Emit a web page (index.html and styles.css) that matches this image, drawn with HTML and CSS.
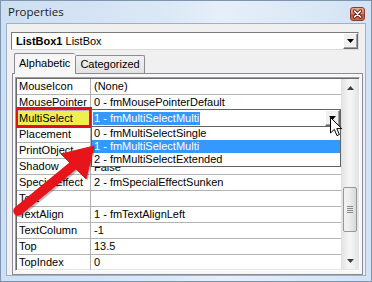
FILE: index.html
```html
<!DOCTYPE html>
<html>
<head>
<meta charset="utf-8">
<link rel="stylesheet" href="styles.css">
</head>
<body>
<div class="window">
  <div class="titlebar">
    <span class="title">Properties</span>
    <div class="close">
      <svg width="15" height="14" viewBox="0 0 15 14">
        <path d="M4.5 4 L10.5 10 M10.5 4 L4.5 10" stroke="#5a1d12" stroke-width="3.2" stroke-linecap="round"/>
        <path d="M4.5 4 L10.5 10 M10.5 4 L4.5 10" stroke="#ffffff" stroke-width="1.6" stroke-linecap="round"/>
      </svg>
    </div>
  </div>
  <div class="client">
    <div class="combo">
      <span class="combo-text"><b>ListBox1</b> ListBox</span>
      <span class="combo-btn"><svg width="7" height="4" viewBox="0 0 7 4"><path d="M0 0 H7 L3.5 4 Z" fill="#000"/></svg></span>
    </div>
    <div class="tabs">
      <div class="tab active">Alphabetic</div>
      <div class="tab">Categorized</div>
    </div>
    <div class="panel">
      <div class="grid">
        <div class="rows">
          <div class="row"><div class="name">MouseIcon</div><div class="value">(None)</div></div>
          <div class="row"><div class="name">MousePointer</div><div class="value">0 - fmMousePointerDefault</div></div>
          <div class="row"><div class="name marked">MultiSelect</div>
            <div class="value editing">
              <div class="editbox">
                <span class="sel">1 - fmMultiSelectMulti</span>
                <span class="edit-btn"><svg width="7" height="4" viewBox="0 0 7 4"><path d="M0 0 H7 L3.5 4 Z" fill="#000"/></svg></span>
                <div class="droplist">
                  <div class="item">0 - fmMultiSelectSingle</div>
                  <div class="item hot">1 - fmMultiSelectMulti</div>
                  <div class="item">2 - fmMultiSelectExtended</div>
                </div>
              </div>
            </div>
          </div>
          <div class="row"><div class="name">Placement</div><div class="value"></div></div>
          <div class="row"><div class="name">PrintObject</div><div class="value"></div></div>
          <div class="row"><div class="name">Shadow</div><div class="value low">False</div></div>
          <div class="row"><div class="name">SpecialEffect</div><div class="value">2 - fmSpecialEffectSunken</div></div>
          <div class="row"><div class="name">Text</div><div class="value"></div></div>
          <div class="row"><div class="name">TextAlign</div><div class="value">1 - fmTextAlignLeft</div></div>
          <div class="row"><div class="name">TextColumn</div><div class="value">-1</div></div>
          <div class="row"><div class="name">Top</div><div class="value">13.5</div></div>
          <div class="row"><div class="name">TopIndex</div><div class="value">0</div></div>
        </div>
        <div class="scrollbar">
          <div class="sb-btn"><svg width="7" height="4" viewBox="0 0 7 4"><path d="M0 4 H7 L3.5 0 Z" fill="#3c3c3c"/></svg></div>
          <div class="sb-track">
            <div class="thumb">
              <svg width="6" height="7" viewBox="0 0 6 7"><path d="M0 0.5 H6 M0 2.5 H6 M0 4.5 H6 M0 6.5 H6" stroke="#8a8a8a" stroke-width="1"/></svg>
            </div>
          </div>
          <div class="sb-btn"><svg width="7" height="4" viewBox="0 0 7 4"><path d="M0 0 H7 L3.5 4 Z" fill="#3c3c3c"/></svg></div>
        </div>
      </div>
    </div>
  </div>

  <svg class="red-arrow" width="372" height="282" viewBox="0 0 372 282">
    <g transform="translate(1.5,1.5)" opacity="0.25">
      <line x1="18" y1="211" x2="74" y2="165" stroke="#000" stroke-width="9.5" stroke-linecap="round"/>
      <polygon points="94,146 61,154 86,179" fill="#000"/>
    </g>
    <line x1="18" y1="211" x2="74" y2="165" stroke="#e8141c" stroke-width="9.5" stroke-linecap="round"/>
    <polygon points="94,146 61,154 86,179" fill="#e8141c" stroke="#e8141c" stroke-width="1" stroke-linejoin="round"/>
  </svg>

  <svg class="cursor" width="14" height="20" viewBox="0 0 14 20">
    <path d="M0.5 0.5 L0.5 16 L4.3 12.4 L7 18.6 L9.4 17.6 L6.8 11.6 L11.8 11.6 Z" fill="#fff" stroke="#000" stroke-width="1" stroke-linejoin="round"/>
  </svg>
</div>
</body>
</html>
```

FILE: styles.css
```css
* { box-sizing: border-box; }

body {
  margin: 0;
  width: 372px;
  height: 282px;
  overflow: hidden;
  font-family: "Liberation Sans", Arial, sans-serif;
  font-size: 11px;
  color: #000;
}

.window {
  position: relative;
  width: 372px;
  height: 282px;
  border: 1px solid #7e95b0;
  background: linear-gradient(90deg, #cddff2 0%, #dbe8f6 45%, #e6eff9 60%, #d3e3f4 100%);
  display: flex;
  flex-direction: column;
}

.titlebar {
  height: 22px;
  display: flex;
  align-items: center;
  justify-content: space-between;
  padding: 0 6px 0 7px;
}

.title {
  font-family: "Open Sans", "Liberation Sans", sans-serif;
  font-size: 11.5px;
  color: #1b1b1b;
  margin-top: -1px;
}

.close {
  width: 15px;
  height: 14px;
  margin-top: 3px;
  border: 1px solid #8c3a2b;
  border-radius: 3px;
  background: linear-gradient(#eaa898 0%, #d98270 45%, #c8503c 55%, #d06a50 100%);
  display: flex;
  align-items: center;
  justify-content: center;
}
.close svg { display: block; margin: -1px; }

.client {
  margin: 0 5px;
  height: 253px;
  background: #f0f0f0;
  border: 1px solid #9db1c8;
  display: flex;
  flex-direction: column;
}

.combo {
  margin: 8px 6px 0 4px;
  height: 18px;
  background: #fff;
  border: 1px solid #7a7a7a;
  border-right-color: #dcdcdc;
  border-bottom-color: #dcdcdc;
  display: flex;
  align-items: center;
  justify-content: space-between;
  padding-left: 4px;
}
.combo-text { line-height: 14px; }
.combo-text b { font-weight: bold; }

.combo-btn, .edit-btn {
  width: 15px;
  height: 16px;
  background: #f0f0f0;
  border: 1px solid;
  border-color: #ffffff #696969 #696969 #ffffff;
  box-shadow: inset -1px -1px 0 #a0a0a0;
  display: flex;
  align-items: center;
  justify-content: center;
}
.combo-btn svg, .edit-btn svg { display: block; }

.tabs {
  display: flex;
  align-items: flex-end;
  height: 20px;
  margin: 3px 0 0 7px;
  position: relative;
  z-index: 2;
}

.tab {
  height: 18px;
  padding: 0 4px;
  border: 1px solid #898c95;
  border-bottom: none;
  background: linear-gradient(#f2f2f2, #e3e3e3);
  line-height: 16px;
  font-size: 11px;
  border-radius: 2px 2px 0 0;
}
.tab.active {
  height: 21px;
  margin-bottom: -1px;
  padding: 0 5px 0 4px;
  background: #f7f7f7;
  line-height: 19px;
  border-right: none;
}

.panel {
  margin: 0 2px 0 5px;
  height: 202px;
  border: 1px solid #898c95;
  background: #f7f7f7;
  padding: 3px 2px 2px 2px;
}

.grid {
  height: 194px;
  display: flex;
  border: 1px solid #a0a0a0;
  border-right-color: #ffffff;
  border-bottom-color: #ffffff;
  box-shadow: inset 1px 1px 0 #696969, inset -1px -1px 0 #e3e3e3;
  padding: 1px 1px 1px 1px;
  background: #fff;
  overflow: hidden;
}

.rows {
  flex: 1;
  display: flex;
  flex-direction: column;
  background: #fff;
}

.row {
  height: 16px;
  flex: none;
  display: flex;
  border-bottom: 1px solid #b2b2b2;
  line-height: 15px;
}

.name {
  width: 74px;
  flex: none;
  border-right: 1px solid #b2b2b2;
  padding-left: 2px;
  white-space: nowrap;
}

.value {
  flex: 1;
  padding-left: 3px;
  white-space: nowrap;
}
.value.low { line-height: 17px; }

.marked {
  position: relative;
  background: #eeee50;
}
.marked::after {
  content: "";
  position: absolute;
  left: -2px;
  top: -4px;
  right: -2px;
  bottom: -2px;
  border: 3px solid #e0101c;
  z-index: 3;
}

.value.editing {
  padding-left: 0;
  position: relative;
  z-index: 4;
}

.editbox {
  position: relative;
  margin-top: -2px;
  height: 18px;
  background: #fff;
  border: 1px solid #646464;
  display: flex;
  align-items: center;
  justify-content: space-between;
  padding-left: 1px;
}

.sel {
  background: #3399ff;
  color: #fff;
  line-height: 13px;
  padding: 0 1px;
}

.edit-btn {
  height: 16px;
}

.droplist {
  position: absolute;
  top: 16px;
  left: -1px;
  right: -1px;
  height: 41px;
  background: #fff;
  border: 1px solid #646464;
  padding: 0;
}

.item {
  height: 13px;
  line-height: 13px;
  padding-left: 2px;
}
.item.hot {
  background: #3399ff;
  color: #fff;
}

.scrollbar {
  width: 17px;
  flex: none;
  display: flex;
  flex-direction: column;
  background: linear-gradient(90deg, #e4e4e4, #f4f4f4 40%, #f4f4f4 60%, #e4e4e4);
  border-left: 1px solid #e0e0e0;
}

.sb-btn {
  height: 17px;
  flex: none;
  display: flex;
  align-items: center;
  justify-content: center;
}

.sb-track {
  flex: 1;
}

.thumb {
  margin: 91px 1px 0 1px;
  height: 45px;
  border: 1px solid #979797;
  border-radius: 2px;
  background: linear-gradient(90deg, #f2f2f2, #ebebeb 50%, #d8d8d8);
  display: flex;
  align-items: center;
  justify-content: center;
}

.red-arrow {
  position: absolute;
  left: -1px;
  top: -1px;
  z-index: 10;
  pointer-events: none;
}

.cursor {
  position: absolute;
  left: 329px;
  top: 116px;
  z-index: 11;
}
```
